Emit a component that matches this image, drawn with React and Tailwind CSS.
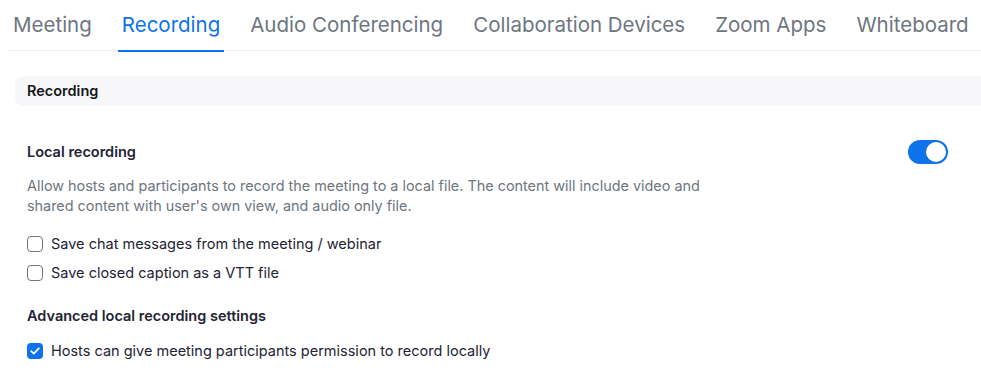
import React from "react";

const tabs = ["Meeting", "Recording", "Audio Conferencing", "Collaboration Devices", "Zoom Apps", "Whiteboard"];

function Checkbox({ checked }) {
  if (checked) {
    return (
      <span className="flex h-[16px] w-[16px] shrink-0 items-center justify-center rounded-[4px] bg-[#0e72ed]">
        <svg width="10" height="8" viewBox="0 0 10 8" fill="none">
          <path d="M1.2 4.2L3.8 6.6L8.8 1.4" stroke="white" strokeWidth="1.8" strokeLinecap="round" strokeLinejoin="round" />
        </svg>
      </span>
    );
  }
  return <span className="h-[16px] w-[16px] shrink-0 rounded-[4px] border border-[#6e7680] bg-white" />;
}

function Row({ checked, children }) {
  return (
    <div className="flex h-[20px] items-center gap-[8px]">
      <Checkbox checked={checked} />
      <span className="text-[14.5px] leading-[20px] text-[#232333]">{children}</span>
    </div>
  );
}

export default function App() {
  return (
    <div className="h-[379px] w-[981px] overflow-hidden bg-white" style={{ fontFamily: "Inter, 'Noto Sans', sans-serif" }}>
      <div className="ml-[9px] flex h-[51px] gap-[22px] border-b border-[#ededf2]">
        {tabs.map((t, i) => (
          <div
            key={t}
            className={
              "-mb-[2px] h-[52px] px-[4px] pt-[13px] text-[20.5px] leading-[24px] border-b-2 whitespace-nowrap " +
              (i === 1 ? "border-[#0e72ed] text-[#0e72ed]" : "border-transparent text-[#6e7680]")
            }
          >
            {t}
          </div>
        ))}
      </div>

      <div className="ml-[15px] mr-[-20px] mt-[25px] flex h-[30px] items-center rounded-l-[8px] bg-[#f7f7fa] pl-[12px]">
        <span className="text-[14.5px] font-semibold leading-[20px] text-[#131619]">Recording</span>
      </div>

      <div className="pl-[27px] pr-[33px]">
        <div className="mt-[34px] flex items-center justify-between">
          <span className="text-[14.5px] font-semibold leading-[20px] text-[#232333]">Local recording</span>
          <span className="flex h-[24px] w-[40px] items-center justify-end rounded-full bg-[#0e72ed] pr-[2px]">
            <span className="h-[20px] w-[20px] rounded-full bg-white" />
          </span>
        </div>
        <p className="mt-[12px] w-[700px] text-[14.4px] leading-[20px] text-[#6e7680]">
          Allow hosts and participants to record the meeting to a local file. The content will include video and shared
          content with user's own view, and audio only file.
        </p>
        <div className="mt-[18px] flex flex-col gap-[9px]">
          <Row>Save chat messages from the meeting / webinar</Row>
          <Row>Save closed caption as a VTT file</Row>
        </div>
        <div className="mt-[23px] text-[14.5px] font-semibold leading-[20px] text-[#232333]">
          Advanced local recording settings
        </div>
        <div className="mt-[15px]">
          <Row checked>Hosts can give meeting participants permission to record locally</Row>
        </div>
      </div>
    </div>
  );
}
